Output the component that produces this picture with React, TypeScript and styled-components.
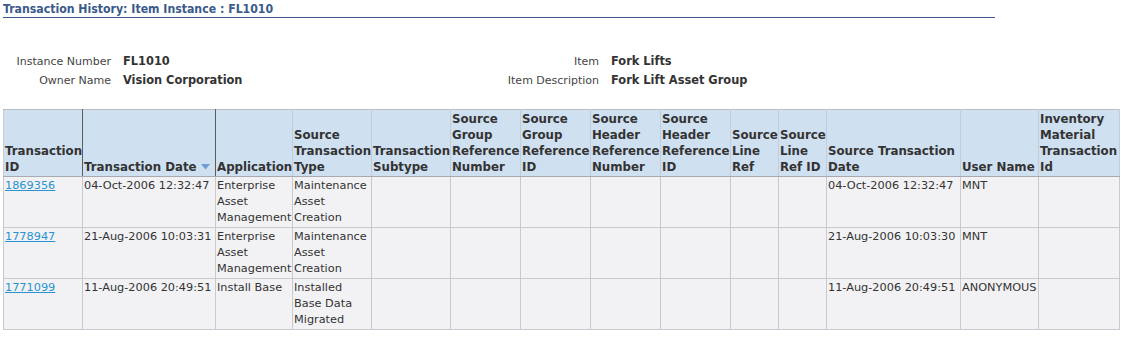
import React from "react";
import styled, { createGlobalStyle } from "styled-components";

const GlobalStyle = createGlobalStyle`
  body {
    margin: 0;
    background: #fff;
    font-family: "DejaVu Sans", Verdana, sans-serif;
    color: #333;
  }
`;

type Row = {
  id: string;
  date: string;
  app: string;
  type: string;
  srcDate: string;
  user: string;
};

const rows: Row[] = [
  {
    id: "1869356",
    date: "04-Oct-2006 12:32:47",
    app: "Enterprise Asset Management",
    type: "Maintenance Asset Creation",
    srcDate: "04-Oct-2006 12:32:47",
    user: "MNT",
  },
  {
    id: "1778947",
    date: "21-Aug-2006 10:03:31",
    app: "Enterprise Asset Management",
    type: "Maintenance Asset Creation",
    srcDate: "21-Aug-2006 10:03:30",
    user: "MNT",
  },
  {
    id: "1771099",
    date: "11-Aug-2006 20:49:51",
    app: "Install Base",
    type: "Installed Base Data Migrated",
    srcDate: "11-Aug-2006 20:49:51",
    user: "ANONYMOUS",
  },
];

const columns = [
  { label: "Transaction ID", width: 79, sortable: true },
  { label: "Transaction Date", width: 133, sortable: true, sorted: true },
  { label: "Application", width: 77 },
  { label: "Source Transaction Type", width: 79 },
  { label: "Transaction Subtype", width: 79 },
  { label: "Source Group Reference Number", width: 70 },
  { label: "Source Group Reference ID", width: 70 },
  { label: "Source Header Reference Number", width: 70 },
  { label: "Source Header Reference ID", width: 70 },
  { label: "Source Line Ref", width: 48 },
  { label: "Source Line Ref ID", width: 48 },
  { label: "Source Transaction Date", width: 134 },
  { label: "User Name", width: 78 },
  { label: "Inventory Material Transaction Id", width: 81 },
];

export default function App() {
  return (
    <Page>
      <GlobalStyle />
      <Title>Transaction History: Item Instance : FL1010</Title>

      <Info>
        <Label>Instance Number</Label>
        <Value>FL1010</Value>
        <Label>Item</Label>
        <Value>Fork Lifts</Value>
        <Label>Owner Name</Label>
        <Value>Vision Corporation</Value>
        <Label>Item Description</Label>
        <Value>Fork Lift Asset Group</Value>
      </Info>

      <Table>
        <colgroup>
          {columns.map((c) => (
            <col key={c.label} style={{ width: c.width }} />
          ))}
        </colgroup>
        <thead>
          <tr>
            {columns.map((c) => (
              <Th key={c.label} sortable={c.sortable}>
                {c.label}
                {c.sorted && (
                  <SortArrow width="9" height="6" viewBox="0 0 9 6">
                    <path d="M0 0h9L4.5 5.5z" fill="#6e9fd2" />
                  </SortArrow>
                )}
              </Th>
            ))}
          </tr>
        </thead>
        <tbody>
          {rows.map((r) => (
            <tr key={r.id}>
              <Td>
                <IdLink href="#">{r.id}</IdLink>
              </Td>
              <Td nowrap>{r.date}</Td>
              <Td>{r.app}</Td>
              <Td>{r.type}</Td>
              <Td />
              <Td />
              <Td />
              <Td />
              <Td />
              <Td />
              <Td />
              <Td nowrap>{r.srcDate}</Td>
              <Td>{r.user}</Td>
              <Td />
            </tr>
          ))}
        </tbody>
      </Table>
    </Page>
  );
}

const Page = styled.div`
  padding: 0 3px;
`;

const Title = styled.h1`
  margin: 0;
  width: 992px;
  padding-top: 1px;
  font-family: "DejaVu Sans Condensed", "DejaVu Sans", sans-serif;
  font-stretch: condensed;
  font-size: 12.2px;
  font-weight: bold;
  line-height: 16px;
  color: #3a5a8b;
  border-bottom: 1px solid #3a5a8b;
`;

const Info = styled.div`
  display: grid;
  grid-template-columns: 108px 350px 114px 1fr;
  column-gap: 12px;
  margin-top: 34px;
  font-size: 11px;
  line-height: 19px;
`;

const Label = styled.div`
  text-align: right;
  color: #444;
`;

const Value = styled.div`
  font-size: 11.4px;
  font-weight: bold;
  color: #333;
`;

const Table = styled.table`
  margin-top: 19px;
  width: 1117px;
  table-layout: fixed;
  border-collapse: collapse;
  font-size: 11.3px;
  line-height: 16px;
`;

const Th = styled.th<{ sortable?: boolean }>`
  background: #cfe0f1;
  color: #333;
  font-size: 11.8px;
  font-weight: bold;
  text-align: left;
  vertical-align: bottom;
  padding: 1px;
  border: 1px solid #c4ccd6;
  border-top-color: #bdbdbd;
  border-bottom: 1px solid #a9aab1;
  border-right-color: ${({ sortable }) => (sortable ? "#5c5c5c" : "#c4ccd6")};
  overflow: hidden;
`;

const SortArrow = styled.svg`
  margin-left: 4px;
  vertical-align: 1px;
`;

const Td = styled.td<{ nowrap?: boolean }>`
  background: #f2f2f5;
  color: #333;
  vertical-align: top;
  padding: 1px;
  height: 48px;
  border: 1px solid #c9c9d0;
  white-space: ${({ nowrap }) => (nowrap ? "nowrap" : "normal")};
  overflow: hidden;
`;

const IdLink = styled.a`
  color: #2a93d0;
  text-decoration: underline;
`;
